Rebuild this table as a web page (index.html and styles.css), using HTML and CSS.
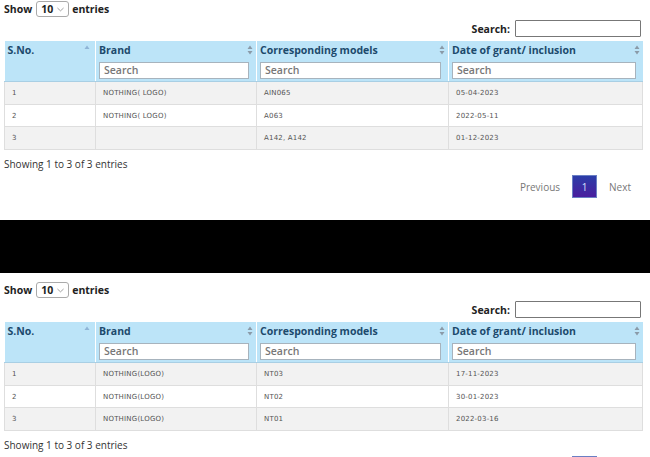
FILE: index.html
```html
<!DOCTYPE html>
<html>
<head>
<meta charset="utf-8">
<link rel="stylesheet" href="styles.css">
</head>
<body>
<section class="dt dt-first">
  <div class="length">Show <span class="select">10<svg class="chev" viewBox="0 0 8 5" width="7" height="5"><path d="M0.5 0.8 L4 4 L7.5 0.8" fill="none" stroke="#888" stroke-width="0.9"/></svg></span> entries</div>
  <div class="filter"><label>Search:</label><span class="gsearch"></span></div>
  <table>
    <colgroup><col class="c1"><col class="c2"><col class="c3"><col class="c4"></colgroup>
    <thead>
      <tr class="head">
        <th>S.No.<span class="sort up"><svg viewBox="0 0 6 8" width="6" height="8"><path d="M3 1.5 L5.5 5 L0.5 5 Z" fill="#8fb4d6"/></svg></span></th>
        <th>Brand<span class="sort"><svg viewBox="0 0 6 10" width="6" height="10"><path d="M3 0.5 L5.5 4 L0.5 4 Z M3 9.5 L5.5 6 L0.5 6 Z" fill="#8a9aa8"/></svg></span></th>
        <th>Corresponding models<span class="sort"><svg viewBox="0 0 6 10" width="6" height="10"><path d="M3 0.5 L5.5 4 L0.5 4 Z M3 9.5 L5.5 6 L0.5 6 Z" fill="#8a9aa8"/></svg></span></th>
        <th>Date of grant/ inclusion<span class="sort"><svg viewBox="0 0 6 10" width="6" height="10"><path d="M3 0.5 L5.5 4 L0.5 4 Z M3 9.5 L5.5 6 L0.5 6 Z" fill="#8a9aa8"/></svg></span></th>
      </tr>
      <tr class="filters">
        <th></th>
        <th><span class="fbox">Search</span></th>
        <th><span class="fbox">Search</span></th>
        <th><span class="fbox">Search</span></th>
      </tr>
    </thead>
    <tbody>
      <tr class="odd"><td>1</td><td>NOTHING( LOGO)</td><td>AIN065</td><td>05-04-2023</td></tr>
      <tr><td>2</td><td>NOTHING( LOGO)</td><td>A063</td><td>2022-05-11</td></tr>
      <tr class="odd"><td>3</td><td></td><td>A142, A142</td><td>01-12-2023</td></tr>
    </tbody>
  </table>
  <div class="info">Showing 1 to 3 of 3 entries</div>
  <div class="paginate"><span class="pbtn">Previous</span><span class="pcur">1</span><span class="pbtn">Next</span></div>
</section>
<div class="band"></div>
<section class="dt dt-second">
  <div class="length">Show <span class="select">10<svg class="chev" viewBox="0 0 8 5" width="7" height="5"><path d="M0.5 0.8 L4 4 L7.5 0.8" fill="none" stroke="#888" stroke-width="0.9"/></svg></span> entries</div>
  <div class="filter"><label>Search:</label><span class="gsearch"></span></div>
  <table>
    <colgroup><col class="c1"><col class="c2"><col class="c3"><col class="c4"></colgroup>
    <thead>
      <tr class="head">
        <th>S.No.<span class="sort up"><svg viewBox="0 0 6 8" width="6" height="8"><path d="M3 1.5 L5.5 5 L0.5 5 Z" fill="#8fb4d6"/></svg></span></th>
        <th>Brand<span class="sort"><svg viewBox="0 0 6 10" width="6" height="10"><path d="M3 0.5 L5.5 4 L0.5 4 Z M3 9.5 L5.5 6 L0.5 6 Z" fill="#8a9aa8"/></svg></span></th>
        <th>Corresponding models<span class="sort"><svg viewBox="0 0 6 10" width="6" height="10"><path d="M3 0.5 L5.5 4 L0.5 4 Z M3 9.5 L5.5 6 L0.5 6 Z" fill="#8a9aa8"/></svg></span></th>
        <th>Date of grant/ inclusion<span class="sort"><svg viewBox="0 0 6 10" width="6" height="10"><path d="M3 0.5 L5.5 4 L0.5 4 Z M3 9.5 L5.5 6 L0.5 6 Z" fill="#8a9aa8"/></svg></span></th>
      </tr>
      <tr class="filters">
        <th></th>
        <th><span class="fbox">Search</span></th>
        <th><span class="fbox">Search</span></th>
        <th><span class="fbox">Search</span></th>
      </tr>
    </thead>
    <tbody>
      <tr class="odd"><td>1</td><td>NOTHING(LOGO)</td><td>NT03</td><td>17-11-2023</td></tr>
      <tr><td>2</td><td>NOTHING(LOGO)</td><td>NT02</td><td>30-01-2023</td></tr>
      <tr class="odd"><td>3</td><td>NOTHING(LOGO)</td><td>NT01</td><td>2022-03-16</td></tr>
    </tbody>
  </table>
  <div class="info">Showing 1 to 3 of 3 entries</div>
  <div class="paginate"><span class="pbtn">Previous</span><span class="pcur">1</span><span class="pbtn">Next</span></div>
</section>
</body>
</html>
```
FILE: styles.css
```css
html, body {
  margin: 0;
  padding: 0;
  background: #fff;
  overflow: hidden;
  height: 457px;
}
body {
  font-family: "Open Sans", "Noto Sans", sans-serif;
  color: #222;
}
.dt {
  padding: 0 8px 0 4px;
  width: 638px;
}
.dt-first { padding-top: 1px; height: 219px; }
.dt-second { padding-top: 9px; }
.band {
  height: 53px;
  background: #000;
}
.length {
  display: flex;
  align-items: center;
  height: 16px;
  font-size: 10.5px;
  font-weight: 700;
  color: #222;
}
.select {
  display: inline-flex;
  align-items: center;
  justify-content: space-between;
  box-sizing: border-box;
  width: 33px;
  height: 16px;
  margin: 0 3px 0 4px;
  padding: 0 4px 0 4px;
  border: 1px solid #aaa;
  border-radius: 3px;
  font-weight: 700;
  font-size: 10.5px;
  color: #222;
}
.chev { margin-top: 1px; }
.filter {
  display: flex;
  justify-content: flex-end;
  align-items: center;
  margin-top: 3px;
  height: 17px;
  font-size: 10.5px;
  font-weight: 700;
}
.filter label { margin-right: 5px; }
.gsearch {
  box-sizing: border-box;
  width: 126px;
  height: 17px;
  border: 1px solid #777;
  margin-right: 1px;
  border-radius: 1px;
}
table {
  margin-top: 4px;
  width: 638px;
  border-collapse: collapse;
  table-layout: fixed;
}
.c1 { width: 91px; }
.c2 { width: 161px; }
.c3 { width: 192px; }
.c4 { width: 194px; }
thead th {
  background: #bce4f8;
  text-align: left;
  padding: 0;
}
.head th {
  height: 18px;
  padding-left: 3px;
  font-size: 10.5px;
  font-weight: 700;
  color: #1c4a6c;
  border-left: 1px solid #fff;
  position: relative;
  white-space: nowrap;
}
.head th:first-child { border-left: none; }
.sort {
  position: absolute;
  right: 3px;
  top: 4px;
  display: flex;
}
.sort.up { top: 3px; right: 5px; }
.filters th {
  height: 22px;
  border-left: 1px solid #fff;
  border-bottom: 1px solid #a9cfe4;
}
.filters th:first-child { border-left: none; }
.fbox {
  display: flex;
  align-items: center;
  box-sizing: border-box;
  height: 17px;
  margin: 0 7px 0 3px;
  padding-left: 4px;
  background: #fff;
  border: 1px solid #a7b3bd;
  font-size: 10.5px;
  font-weight: 600;
  color: #777;
}
tbody td {
  height: 21.7px;
  padding: 0 0 0 7px;
  border: 1px solid #dedede;
  font-family: "DejaVu Sans", sans-serif;
  font-size: 7px;
  color: #555;
  letter-spacing: 0.2px;
  background: #fff;
}
tbody tr.odd td { background: #f2f2f2; }
.info {
  margin-top: 7px;
  font-size: 10px;
  color: #333;
}
.paginate {
  display: flex;
  justify-content: flex-end;
  align-items: center;
  margin-top: 4px;
  padding-right: 11px;
}
.pbtn {
  font-size: 10px;
  color: #777;
}
.pcur {
  display: flex;
  align-items: center;
  justify-content: center;
  width: 25px;
  height: 23px;
  margin: 0 12px;
  box-sizing: border-box;
  border: 1px solid #6a7fc4;
  background: linear-gradient(to bottom, #2b3da8, #4a1e9e);
  color: #d4e2ff;
  font-size: 10px;
}
```
